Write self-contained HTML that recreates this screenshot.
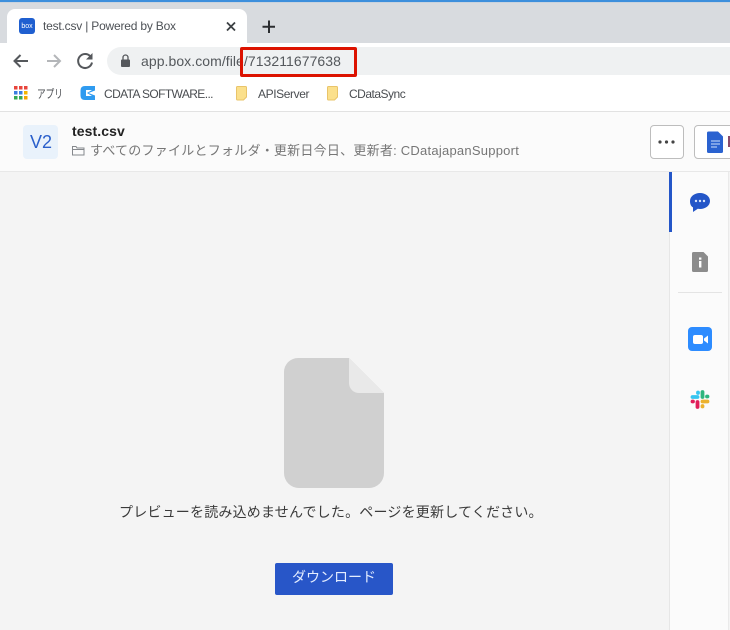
<!DOCTYPE html>
<html><head><meta charset="utf-8">
<style>
html,body{margin:0;padding:0;width:730px;height:630px;overflow:hidden;background:#f4f4f4;}
body{position:relative;font-family:"Liberation Sans","Noto Sans CJK JP",sans-serif;}
.a{position:absolute;white-space:nowrap;line-height:1;}
svg{position:absolute;overflow:visible;}
</style></head>
<body>
<!-- chrome -->
<div class="a" style="left:0;top:0;width:730px;height:43px;background:#d8dbdf;"></div>
<div class="a" style="left:0;top:0;width:730px;height:2px;background:#3d8fdc;"></div>
<div class="a" style="left:0;top:2px;width:730px;height:1px;background:#c9d3de;"></div>
<div class="a" style="left:7px;top:9px;width:240px;height:35px;background:#fff;border-radius:8px 8px 0 0;"></div>
<div class="a" style="left:0;top:43px;width:730px;height:68px;background:#fff;"></div>
<div class="a" style="left:19px;top:18px;width:16px;height:16px;border-radius:3px;background:#1f5fd0;"></div>
<div class="a" style="left:19px;top:22.5px;width:16px;text-align:center;font-size:7px;color:#fff;">box</div>
<div class="a" style="left:43px;top:20px;font-size:12px;color:#4d5156;letter-spacing:-.2px;">test.csv | Powered by Box</div>
<svg style="left:0;top:0" width="730" height="110" fill="none">
<path d="M227 22.500L235 30.500M235 22.500L227 30.500" stroke="#3c4043" stroke-width="1.800"/>
<path d="M269 20.500V33M262.500 26.700H275" stroke="#2b2d30" stroke-width="2"/>
<path d="M28 61H15M20.500 55L14.500 61L20.500 67" stroke="#55585c" stroke-width="2"/>
<path d="M60 61H47M54 55L60 61L54 67" stroke="#b4b6b9" stroke-width="2"/>
<path d="M90.500 56.500A7 7 0 1 0 92 62.500" stroke="#55585c" stroke-width="2"/>
<path d="M86 59.500H92.500V53z" fill="#55585c"/>
</svg>
<div class="a" style="left:107px;top:47px;width:623px;height:28px;background:#eff1f2;border-radius:14px 0 0 14px;"></div>
<svg style="left:0;top:0" width="730" height="110" fill="none">
<rect x="121" y="59.500" width="9" height="7.500" rx="1" fill="#55585c"/>
<path d="M123 60V57.500a2.500 2.500 0 0 1 5 0V60" stroke="#55585c" stroke-width="1.300"/>
</svg>
<div class="a" style="left:141px;top:54px;font-size:14px;color:#54585c;letter-spacing:.06px;">app.box.com/file/713211677638</div>
<div class="a" style="left:240px;top:47px;width:111px;height:24px;border:3px solid #dc1200;border-radius:2px;"></div>

<!-- bookmarks -->
<svg style="left:0;top:0" width="730" height="110">
<g>
<rect x="14" y="86" width="3.500" height="3.500" fill="#e8453c"/><rect x="19" y="86" width="3.500" height="3.500" fill="#e8453c"/><rect x="24" y="86" width="3.500" height="3.500" fill="#e8453c"/>
<rect x="14" y="91" width="3.500" height="3.500" fill="#3b7de0"/><rect x="19" y="91" width="3.500" height="3.500" fill="#3b7de0"/><rect x="24" y="91" width="3.500" height="3.500" fill="#f4b400"/>
<rect x="14" y="96" width="3.500" height="3.500" fill="#34a853"/><rect x="19" y="96" width="3.500" height="3.500" fill="#34a853"/><rect x="24" y="96" width="3.500" height="3.500" fill="#f4a400"/>
</g>
<path d="M85 86H95V90.500L88.500 93L95 95.500V100H85Q80.500 100 80.500 95.500V90.500Q80.500 86 85 86z" fill="#2f9bf0"/>
<path d="M86 90H92L87 93L92 96H86z" fill="#fff"/>
<path d="M237.500 86.500h8a1 1 0 0 1 1 1v9.500l-3 3h-6a1 1 0 0 1-1-1v-11.500a1 1 0 0 1 1-1z" fill="#fbe08c" stroke="#e9c46a" stroke-width="1"/>
<path d="M328.500 86.500h8a1 1 0 0 1 1 1v9.500l-3 3h-6a1 1 0 0 1-1-1v-11.500a1 1 0 0 1 1-1z" fill="#fbe08c" stroke="#e9c46a" stroke-width="1"/>
</svg>
<div class="a" style="left:37px;top:88px;font-size:12px;color:#4a4d51;transform:scaleX(.72);transform-origin:left top;">アプリ</div>
<div class="a" style="left:104px;top:88px;font-size:12px;color:#4a4d51;letter-spacing:-.6px;">CDATA SOFTWARE...</div>
<div class="a" style="left:258px;top:88px;font-size:12px;color:#4a4d51;letter-spacing:-.4px;">APIServer</div>
<div class="a" style="left:349px;top:88px;font-size:12px;color:#4a4d51;letter-spacing:-.5px;">CDataSync</div>

<!-- box header -->
<div class="a" style="left:0;top:111px;width:730px;height:1px;background:#e2e2e2;"></div>
<div class="a" style="left:0;top:112px;width:730px;height:59px;background:#fbfbfb;"></div>
<div class="a" style="left:0;top:171px;width:730px;height:1px;background:#e8e8e8;"></div>
<div class="a" style="left:23px;top:125px;width:35px;height:34px;background:#e9f2fb;border-radius:4px;"></div>
<div class="a" style="left:23px;top:133px;width:36px;text-align:center;font-size:18px;color:#2a5fcb;">V2</div>
<div class="a" style="left:72px;top:124px;font-size:14px;font-weight:bold;color:#222;letter-spacing:.1px;">test.csv</div>
<svg style="left:0;top:0" width="730" height="172" fill="none">
<path d="M72.500 146.500h3.500l1 1.500h7v7h-11.500zM72.500 149.500h11.500" stroke="#85888c" stroke-width="1"/>
</svg>
<div class="a" style="left:90px;top:144px;font-size:13px;color:#767676;letter-spacing:.24px;">すべてのファイルとフォルダ・更新日今日、更新者: CDatajapanSupport</div>

<div class="a" style="left:650px;top:125px;width:32px;height:32px;background:#fff;border:1px solid #bdbdbd;border-radius:4px;"></div>
<svg style="left:0;top:0" width="730" height="172">
<circle cx="660" cy="142" r="1.600" fill="#444"/><circle cx="666.500" cy="142" r="1.600" fill="#444"/><circle cx="673" cy="142" r="1.600" fill="#444"/>
</svg>
<div class="a" style="left:694px;top:125px;width:40px;height:32px;background:#fff;border:1px solid #bdbdbd;border-radius:4px;"></div>
<svg style="left:0;top:0" width="730" height="172">
<path d="M708.500 131.500h9.500l5 5v15a1.500 1.500 0 0 1-1.500 1.500h-13a1.500 1.500 0 0 1-1.500-1.500v-18.500a1.500 1.500 0 0 1 1.500-1.500z" fill="#2a62d0"/>
<path d="M711 141h9M711 144h9M711 147h6" stroke="#cfe0fb" stroke-width="1"/>
<rect x="728" y="136" width="2" height="11" fill="#8a4a6a"/>
</svg>

<!-- sidebar -->
<div class="a" style="left:669px;top:172px;width:60px;height:458px;background:#fbfbfb;border-left:1px solid #e6e6e6;box-sizing:border-box;"></div>
<div class="a" style="left:728px;top:172px;width:1px;height:458px;background:#eaeaea;"></div>
<div class="a" style="left:669px;top:172px;width:3px;height:60px;background:#2456c8;"></div>
<svg style="left:0;top:0" width="730" height="630">
<path d="M700 193c5.500 0 10 3.400 10 8s-4.500 8-10 8c-.8 0-1.500-.1-2.200-.2L693 212v-4.600c-2.400-1.400-3-3.800-3-6.400 0-4.600 4.500-8 10-8z" fill="#2456c8"/>
<circle cx="696" cy="201" r="1.200" fill="#d8e4fb"/><circle cx="700" cy="201" r="1.200" fill="#d8e4fb"/><circle cx="704" cy="201" r="1.200" fill="#d8e4fb"/>
<path d="M693.500 252h10l4.500 4.500v14a1.500 1.500 0 0 1-1.500 1.500h-13a1.500 1.500 0 0 1-1.500-1.500v-17a1.500 1.500 0 0 1 1.500-1.500z" fill="#8c8c8c"/>
<rect x="699" y="261" width="2.400" height="6.500" fill="#fff"/><rect x="699" y="257.500" width="2.400" height="2.200" fill="#fff"/>
<rect x="678" y="292" width="44" height="1" fill="#e4e4e4"/>
<rect x="688" y="327" width="24" height="24" rx="4" fill="#2d8cff"/>
<rect x="693" y="335" width="10" height="9" rx="2" fill="#fff"/>
<path d="M704 338.500L708 335.500V343.500L704 340.500z" fill="#fff"/>
<g stroke-width="3.800" stroke-linecap="round" fill="none">
<path d="M692.500 397H697.500" stroke="#36c5f0"/><path d="M698 392.500V393" stroke="#36c5f0"/>
<path d="M702.500 392V397" stroke="#2eb67d"/><path d="M707 396.500H707.500" stroke="#2eb67d"/>
<path d="M702.500 401.500H707.500" stroke="#ecb22e"/><path d="M702.500 406V406.500" stroke="#ecb22e"/>
<path d="M697.500 402V407" stroke="#e01e5a"/><path d="M692.500 401.500H693" stroke="#e01e5a"/>
</g>
<!-- file icon -->
<path d="M298 358H349L384 393V473a15 15 0 0 1-15 15H299a15 15 0 0 1-15-15V372a14 14 0 0 1 14-14z" fill="#d0d0d0"/>
<path d="M349 358L384 393H359a10 10 0 0 1-10-10z" fill="#e9e9e9"/>
</svg>

<div class="a" style="left:119px;top:505px;font-size:14px;color:#3a3a3a;letter-spacing:.2px;">プレビューを読み込めませんでした。ページを更新してください。</div>
<div class="a" style="left:275px;top:563px;width:118px;height:32px;background:#2856c8;border-radius:2px;"></div>
<div class="a" style="left:275px;top:570px;width:118px;text-align:center;font-size:14px;color:#e4edff;">ダウンロード</div>
</body></html>
